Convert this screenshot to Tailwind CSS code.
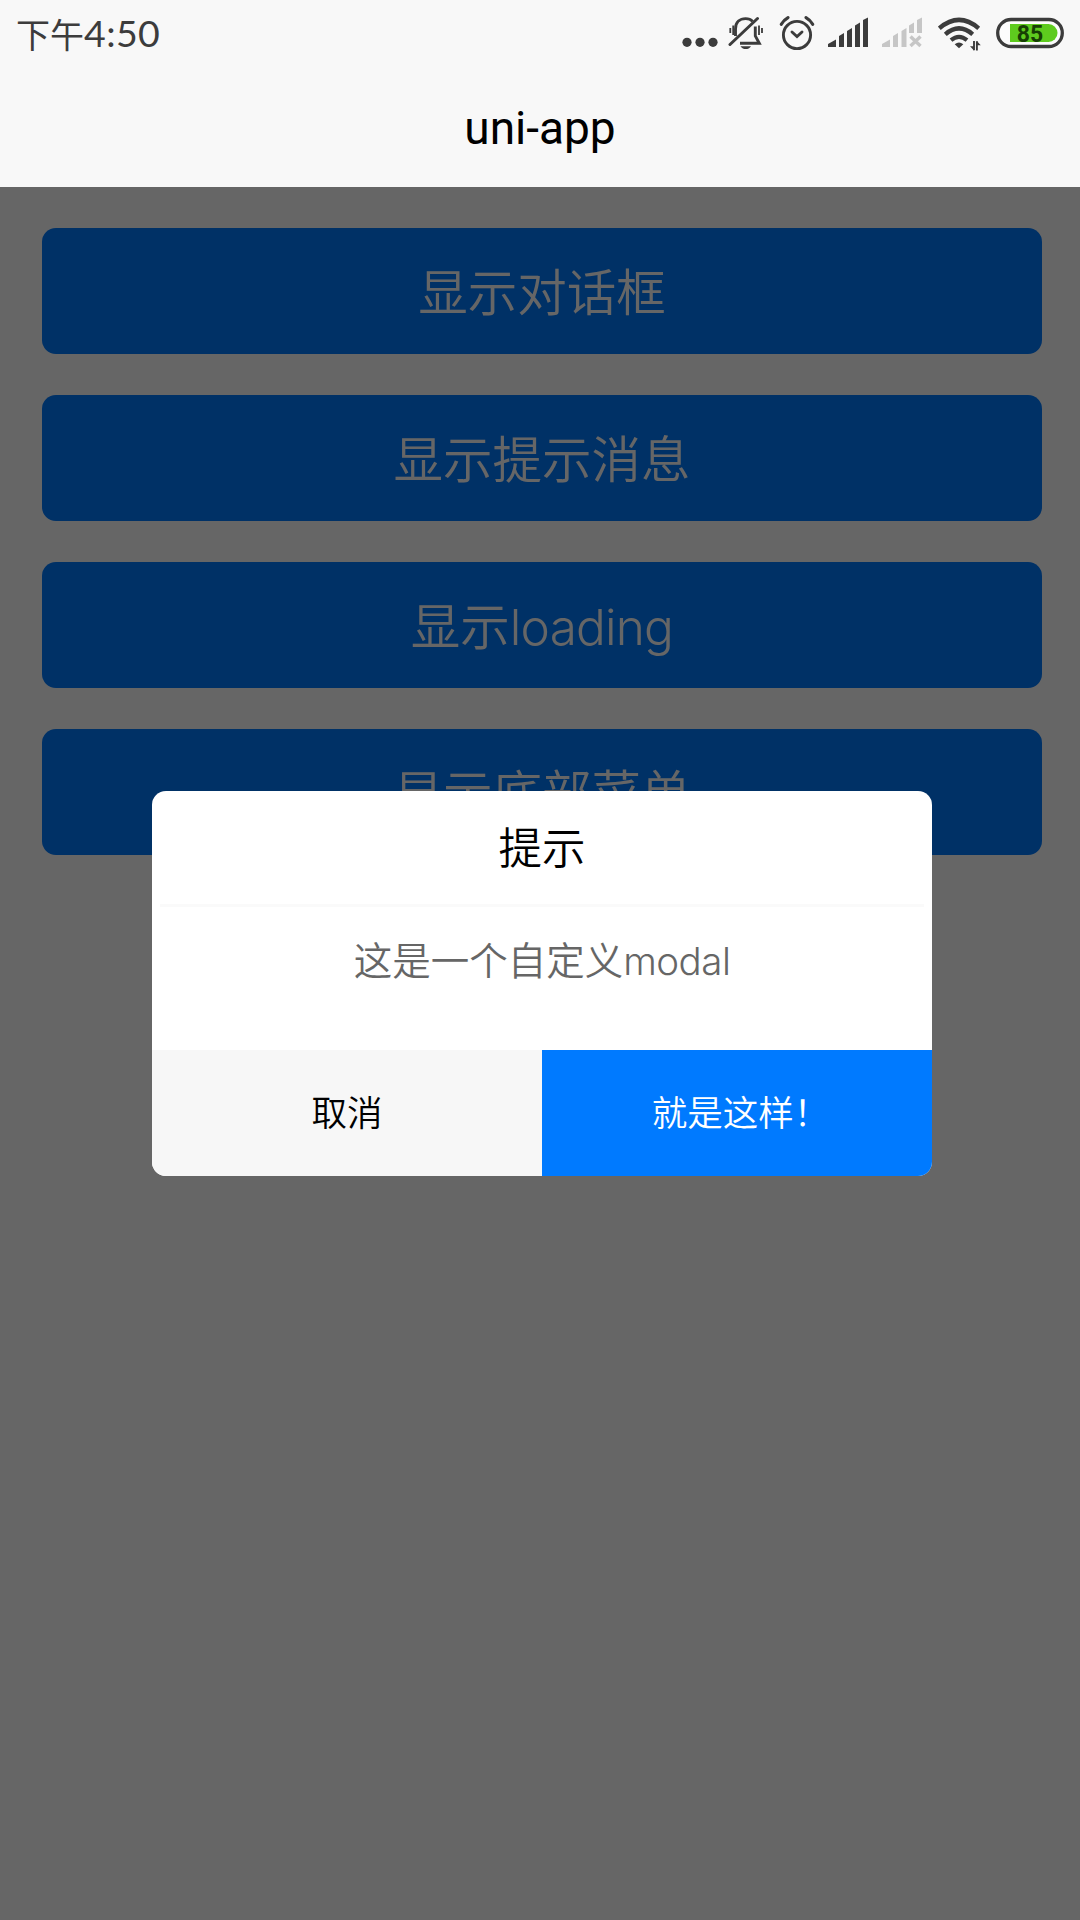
<!DOCTYPE html>
<html lang="zh-CN">
<head>
    <meta charset="UTF-8">
    <meta name="viewport" content="width=device-width, initial-scale=1.0">
    <title>uni-app</title>
    <script src="https://cdn.jsdelivr.net/npm/@tailwindcss/browser@4"></script>
</head>
<body class="bg-white font-['Inter','Noto_Sans_CJK_SC',sans-serif] w-[1080px] h-[1920px] overflow-hidden flex flex-col">
    <header class="bg-[#f8f8f8] h-[187px] shrink-0">
        <!-- Status bar -->
        <div class="h-[66px] pl-4 pr-4 flex items-start justify-between text-[#3c3c3c]">
            <div class="flex items-center h-[66px] leading-none">
                <span class="font-['Noto_Sans_CJK_SC',sans-serif] text-[34px] pt-px">下午</span>
                <span class="font-['Lato',sans-serif] text-[37.5px] tracking-[0.4px] pb-px">4:50</span>
            </div>
            <div class="flex h-[66px]">
                <svg class="w-[36px] h-[66px] mr-[10px]" viewBox="0 0 36 66" fill="currentColor">
                    <circle cx="5" cy="42.3" r="4.6" />
                    <circle cx="18" cy="42.3" r="4.6" />
                    <circle cx="31" cy="42.3" r="4.6" />
                </svg>
                <!-- Muted bell -->
                <svg class="w-[36px] h-[66px] mr-[15px]" viewBox="0 0 36 66" fill="none" stroke="currentColor">
                    <path d="M7.5 36V29C7.5 22 12 18.6 17.6 18.6c3.2 0 5.4 1 7 2.8M27.3 26.5V36l4 7.3H12" stroke-width="2.9" />
                    <path d="M2 44.5L29.5 18.5" stroke-width="3" stroke-linecap="round" />
                    <path d="M2.3 28v5M5.2 25.5v9.5M31 25.5v9.5M34 28v5" stroke-width="1.8" />
                    <path d="M12.5 46.2h10.5c-1.3 2-3.2 2.9-5.2 2.9s-4-.9-5.3-2.9z" fill="currentColor" stroke="none" />
                </svg>
                <!-- Alarm clock -->
                <svg class="w-[36px] h-[66px] mr-[13px]" viewBox="0 0 36 66" fill="none" stroke="currentColor" stroke-linecap="round">
                    <circle cx="18" cy="35" r="13.6" stroke-width="2.9" />
                    <path d="M2.3 24.3C4 21.3 6 19.3 9 17.6M33.7 24.3C32 21.3 30 19.3 27 17.6" stroke-width="3.2" />
                    <path d="M13 32l5 4.5 5-4.5" stroke-width="2.9" />
                </svg>
                <svg class="w-[40px] h-[66px] mr-[14px]" viewBox="0 0 40 66" fill="currentColor">
                    <path d="M0 47v-3l8-4.5V47zM11 47V36l5-3v14zM19 47V31l5-3v19zM27 47V25.5l5-3V47zM35 47V20l5-2.5V47z" />
                </svg>
                <!-- Second SIM, no signal -->
                <svg class="w-[40px] h-[66px] mr-[16px] text-[#c6c6c6]" viewBox="0 0 40 66" fill="currentColor">
                    <path d="M0 47v-3l8-4.5V47zM11 47V36l5-3v14zM19.500 47V31l5-3v19zM27 33v-7.5l5-3V33zM35 33V20l5-2.5V33z" />
                    <path d="M28.5 36.5l10 9.5M38.5 36.5l-10 9.5" fill="none" stroke="currentColor" stroke-width="3.4" />
                </svg>
                <!-- Wi-Fi -->
                <svg class="w-[43px] h-[66px] mr-[15px]" viewBox="0 0 43 66" fill="none" stroke="currentColor">
                    <path d="M1.3 28.3Q21 11.5 40.7 28.3" stroke-width="4.4" />
                    <path d="M7.3 34.3Q21 22.5 34.7 34.3" stroke-width="4.4" />
                    <path d="M13 40.2Q21 33.5 29 40.2" stroke-width="4.2" />
                    <path d="M16.7 44.3q4.3-3.6 8.6 0L21 48.2z" fill="currentColor" stroke="none" />
                    <path d="M36 41v9.3M38.9 50.5v-9.3" stroke-width="1.9" />
                    <path d="M32 46.2h4v4.3zM42.8 45.3h-4V41z" fill="currentColor" stroke="none" />
                </svg>
                <!-- Battery -->
                <svg class="w-[68px] h-[66px]" viewBox="0 0 68 66">
                    <rect x="1.7" y="19.5" width="64.6" height="27" rx="13.5" fill="#fcfcfc" stroke="#3c3c3c" stroke-width="3.3" />
                    <path d="M14 24h38.500a9 9 0 0 1 0 18H14z" fill="#5ecb1e" />
                    <text x="34" y="41.5" text-anchor="middle" fill="#173f04" class="font-['Roboto',sans-serif] text-[23px] font-bold">85</text>
                </svg>
            </div>
        </div>
        <h1 class="font-['Roboto',sans-serif] text-[46px] leading-[54px] text-center text-black mt-[35px]">uni-app</h1>
    </header>

    <main class="relative flex-1">
        <div class="flex flex-col gap-[41px] pt-[41px] pl-[42px] pr-[38px] text-[49.5px] font-[350] text-white">
            <button class="h-[126px] pt-[5px] rounded-[14px] bg-[#007aff]">显示对话框</button>
            <button class="h-[126px] pt-[5px] rounded-[14px] bg-[#007aff]">显示提示消息</button>
            <button class="h-[126px] pt-[5px] rounded-[14px] bg-[#007aff]">显示<span class="tracking-[-0.8px]">loading</span></button>
            <button class="h-[126px] pt-[5px] rounded-[14px] bg-[#007aff]">显示底部菜单</button>
        </div>

        <!-- Modal -->
        <div class="absolute inset-0 bg-black/60 pt-[604px] pl-[152px]">
            <div class="w-[780px] h-[385px] bg-white rounded-[14px] overflow-hidden flex flex-col font-[350]">
                <div class="h-[113px] pt-[2px] flex items-center justify-center text-[43.5px] text-black">提示</div>
                <div class="h-[3px] mx-2 bg-[#fafafa]"></div>
                <div class="flex-1 pt-[24px] text-center text-[38.5px] leading-[60px] text-[#666]">这是一个自定义<span class="tracking-[-0.5px]">modal</span></div>
                <div class="h-[126px] grid grid-cols-2 text-[35.5px]">
                    <button class="pt-[2px] bg-[#f7f7f7] text-black">取消</button>
                    <button class="pt-[2px] pl-[7px] bg-[#007aff] text-white">就是这样！</button>
                </div>
            </div>
        </div>
    </main>
</body>
</html>
